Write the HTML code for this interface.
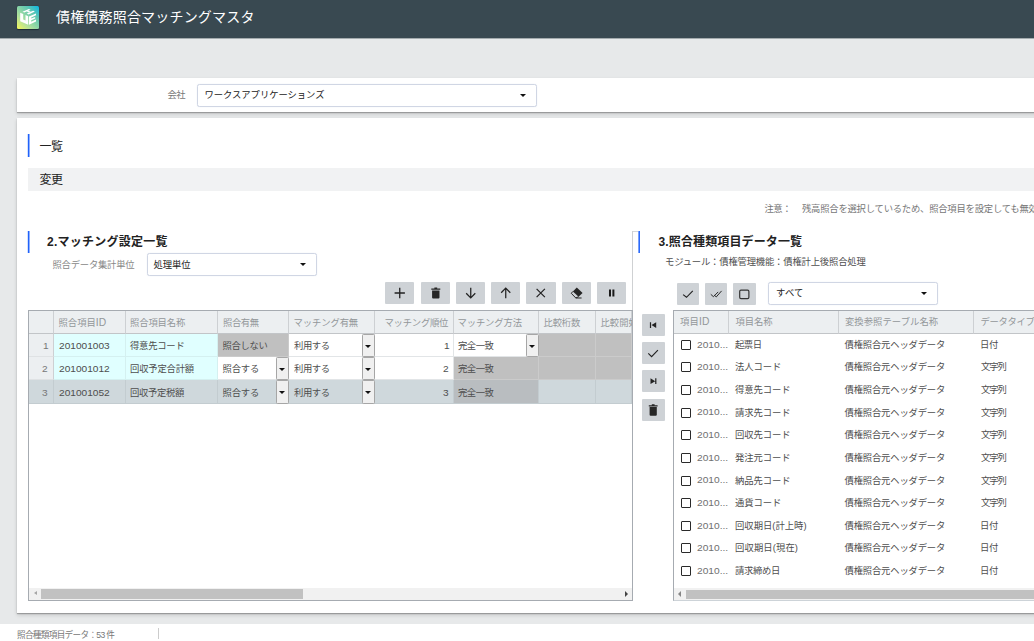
<!DOCTYPE html>
<html lang="ja">
<head>
<meta charset="utf-8">
<title>債権債務照合マッチングマスタ</title>
<style>
*{box-sizing:border-box;margin:0;padding:0}
html,body{width:1034px;height:641px;overflow:hidden}
body{background:#e7e9ea;font-family:"Liberation Sans","Noto Sans CJK JP",sans-serif;font-size:9.33px;color:#333;position:relative}
.abs{position:absolute}
.t{position:absolute;white-space:nowrap;line-height:1}
#hdr{left:0;top:0;width:1034px;height:39px;background:#394951;border-bottom:1px solid #a4abae}
#logo{left:17px;top:6px;width:22px;height:22.5px;border-radius:1.5px;box-shadow:0 .6px 1px rgba(5,15,35,.55);background:linear-gradient(45deg,#f6f658 0%,#b4e29a 30%,#5cc6b4 72%,#08b6e6 100%)}
.card{background:#fff;box-shadow:0 1px 1px rgba(0,0,0,.25),0 2px 4px rgba(0,0,0,.15)}
#card1{left:17px;top:78px;width:1030px;height:34px}
#card2{left:17px;top:118px;width:1030px;height:495px}
.sel{position:absolute;height:23px;background:#fff;border:1px solid #d0d6e4;border-radius:2.5px;box-shadow:0 0 1px rgba(160,175,205,.35)}
.caret{position:absolute;right:10px;top:9px;width:0;height:0;border-left:3.2px solid transparent;border-right:3.2px solid transparent;border-top:3.4px solid #111}
.bar{position:absolute;width:3px;background:linear-gradient(90deg,rgba(32,98,250,.2) 0 1px,rgb(32,98,250) 1px 2px,rgba(32,98,250,.5) 2px 3px)}
.bar.b3{background:linear-gradient(90deg,rgba(32,98,250,0) 0 1px,rgba(32,98,250,.6) 1px 2px,rgba(32,98,250,.95) 2px 3px)}
.gbtn{position:absolute;background:#ced2d6;border-radius:1px}
.gbtn svg{position:absolute;left:0;top:0;width:100%;height:100%}
.frame{position:absolute;border:1px solid #a6abb1;background:#fff}
.c{position:absolute;border-right:1px solid #e2e5e7;border-bottom:1px solid #e2e5e7;background:#fff}
.h{background:#eceff1;border-right:1px solid #cdd0d3;border-bottom:1px solid #c2c5c8}
.rn{border-bottom-color:#dfe2e4}
.ro{background:#e0ffff;border-color:#d4f0f0}
.dis{background:#c0c0c0;border-color:#cbcbcb}
.selrow{background:#cfd8dc;border-color:#c3ccd0}
.dissel{background:#b9bdc0;border-color:#c3ccd0}
.dd{position:absolute;width:13px;top:0;bottom:-1px;background:#f0f0f0;border:1px solid #a6a6a6;border-radius:1.3px}
.dd i{position:absolute;left:2.4px;top:9.5px;width:0;height:0;border-left:3.1px solid transparent;border-right:3.1px solid transparent;border-top:3.2px solid #111}
.sb{position:absolute;height:12px;background:#f1f1f1}
.sbth{position:absolute;top:1px;height:9.6px;background:#c1c1c1}
.arl{position:absolute;left:4.5px;top:3.2px;width:0;height:0;border-top:2.6px solid transparent;border-bottom:2.6px solid transparent;border-right:3px solid #a6a6a6}
.arr{position:absolute;right:4.2px;top:2.8px;width:0;height:0;border-top:3.1px solid transparent;border-bottom:3.1px solid transparent;border-left:3.8px solid #444}
.cb{position:absolute;width:10px;height:10px;border:1.2px solid #2a2a2a;border-radius:1px;background:#fff}
#clipL{left:0;top:0;width:632px;height:641px;overflow:hidden}

</style>
</head>
<body>
<div id="hdr" class="abs"></div>
<div id="logo" class="abs">
<svg viewBox="0 0 22 22" width="22" height="22"><g fill="#fff"><path d="M3.2 6.7L6.2 8V13.6L8.5 14.6V9L11.2 10.2V18.8L3.2 15.3Z"/><path d="M12 10.5L19 7.5V9.3L14.2 11.4V12.6L18.2 10.9V12.6L14.2 14.3V15.7L19 13.6V15.4L12 18.8Z"/><path d="M5.5 5.8L7.3 6.6L13.6 3.8L11.8 3Z"/><path d="M9.8 7.6L11.6 8.4L17.9 5.6L16.1 4.8Z"/><path d="M9.5 5.6L12 6.6L13.9 5.8L11.4 4.8Z"/></g></svg>
</div>

<div id="card1" class="abs card"></div>
<div class="sel" style="left:197px;top:84px;width:340px;height:22.5px"><div class="caret"></div></div>

<div id="card2" class="abs card"></div>
<div class="bar" style="left:27px;top:134px;height:23px"></div>
<div class="abs" style="left:28px;top:168.4px;width:1010px;height:22.5px;background:#f1f2f3"></div>

<!-- section 2 -->
<div class="bar" style="left:27px;top:231px;height:22px"></div>
<div class="sel" style="left:146.5px;top:253px;width:170px"><div class="caret"></div></div>

<div class="gbtn" style="left:385.2px;top:282px;width:29.2px;height:22px"><svg viewBox="0 0 29.2 22"><path d="M14.75 5.8v10.4M9.6 11h10.3" stroke="#222" stroke-width="1.3" fill="none"/></svg></div>
<div class="gbtn" style="left:420.5px;top:282px;width:29.2px;height:22px"><svg viewBox="0 0 29.2 22"><path d="M10.3 6.6h9v1.2h-9zM13.4 5.6h2.8v1.2h-2.8zM11.1 8.4h7.4v7.2a1 1 0 0 1-1 1h-5.4a1 1 0 0 1-1-1z" fill="#262626"/></svg></div>
<div class="gbtn" style="left:455.8px;top:282px;width:29.2px;height:22px"><svg viewBox="0 0 29.2 22"><path d="M14.75 5.8v10M10.2 11.3l4.55 4.6 4.55-4.6" stroke="#222" stroke-width="1.25" fill="none"/></svg></div>
<div class="gbtn" style="left:491.1px;top:282px;width:29.2px;height:22px"><svg viewBox="0 0 29.2 22"><path d="M14.75 16.2v-10M10.2 10.7l4.55-4.6 4.55 4.6" stroke="#222" stroke-width="1.25" fill="none"/></svg></div>
<div class="gbtn" style="left:526.4px;top:282px;width:29.2px;height:22px"><svg viewBox="0 0 29.2 22"><path d="M10.6 6.9l8.3 8.3M18.9 6.9l-8.3 8.3" stroke="#222" stroke-width="1.2" fill="none"/></svg></div>
<div class="gbtn" style="left:561.8px;top:282px;width:29.2px;height:22px"><svg viewBox="0 0 29.2 22"><path d="M14.8 5.5L20.6 10.9 16.6 14.7 10.9 9.4Z" fill="#262626"/><path d="M10.9 9.4L9.3 11.3 13.8 16H19.6M13.8 16L16.6 14.7" stroke="#262626" stroke-width="1" fill="none"/></svg></div>
<div class="gbtn" style="left:597.1px;top:282px;width:29.2px;height:22px"><svg viewBox="0 0 29.2 22"><path d="M12 7.6h2v7h-2zM15.4 7.6h2v7h-2z" fill="#1a1a1a"/></svg></div>

<div class="frame" style="left:28px;top:310px;width:605px;height:291px"></div>
<div id="clipL" class="abs">
<div class="c h" style="left:29px;top:311px;width:25px;height:23px"></div>
<div class="c h" style="left:54px;top:311px;width:72px;height:23px"></div>
<div class="c h" style="left:126px;top:311px;width:92px;height:23px"></div>
<div class="c h" style="left:218px;top:311px;width:71px;height:23px"></div>
<div class="c h" style="left:289px;top:311px;width:86px;height:23px"></div>
<div class="c h" style="left:375px;top:311px;width:79px;height:23px"></div>
<div class="c h" style="left:454px;top:311px;width:85px;height:23px"></div>
<div class="c h" style="left:539px;top:311px;width:57px;height:23px"></div>
<div class="c h" style="left:596px;top:311px;width:36px;height:23px"></div>
<div class="c h rn" style="left:29px;top:334px;width:25px;height:23px"></div>
<div class="c ro" style="left:54px;top:334px;width:72px;height:23px"></div>
<div class="c ro" style="left:126px;top:334px;width:92px;height:23px"></div>
<div class="c dis" style="left:218px;top:334px;width:71px;height:23px"></div>
<div class="c " style="left:289px;top:334px;width:86px;height:23px"><span class="dd" style="left:73px"><i></i></span></div>
<div class="c " style="left:375px;top:334px;width:79px;height:23px"></div>
<div class="c " style="left:454px;top:334px;width:85px;height:23px"><span class="dd" style="left:72px"><i></i></span></div>
<div class="c dis" style="left:539px;top:334px;width:57px;height:23px"></div>
<div class="c dis" style="left:596px;top:334px;width:36px;height:23px"></div>
<div class="c h rn" style="left:29px;top:357px;width:25px;height:23px"></div>
<div class="c ro" style="left:54px;top:357px;width:72px;height:23px"></div>
<div class="c ro" style="left:126px;top:357px;width:92px;height:23px"></div>
<div class="c " style="left:218px;top:357px;width:71px;height:23px"><span class="dd" style="left:58px"><i></i></span></div>
<div class="c " style="left:289px;top:357px;width:86px;height:23px"><span class="dd" style="left:73px"><i></i></span></div>
<div class="c " style="left:375px;top:357px;width:79px;height:23px"></div>
<div class="c dis" style="left:454px;top:357px;width:85px;height:23px"></div>
<div class="c dis" style="left:539px;top:357px;width:57px;height:23px"></div>
<div class="c dis" style="left:596px;top:357px;width:36px;height:23px"></div>
<div class="c h rn selrow" style="left:29px;top:380px;width:25px;height:24px"></div>
<div class="c ro selrow" style="left:54px;top:380px;width:72px;height:24px"></div>
<div class="c ro selrow" style="left:126px;top:380px;width:92px;height:24px"></div>
<div class="c  selrow" style="left:218px;top:380px;width:71px;height:24px"><span class="dd" style="left:58px"><i></i></span></div>
<div class="c  selrow" style="left:289px;top:380px;width:86px;height:24px"><span class="dd" style="left:73px"><i></i></span></div>
<div class="c  selrow" style="left:375px;top:380px;width:79px;height:24px"></div>
<div class="c dissel" style="left:454px;top:380px;width:85px;height:24px"></div>
<div class="c selrow" style="left:539px;top:380px;width:57px;height:24px"></div>
<div class="c selrow" style="left:596px;top:380px;width:36px;height:24px"></div>
<div class="t" id="t21" style="left:600.50px;top:319.00px;font-size:9.33px;color:#93979a;">比較開始位置</div>
</div>
<div class="sb" style="left:29px;top:588px;width:603px"><i class="arl"></i><i class="arr"></i><div class="sbth" style="left:12px;width:262px"></div></div>

<!-- splitter -->
<div class="abs" style="left:632px;top:231px;width:1px;height:79px;background:#cfd1d3"></div>
<div class="abs" style="left:633px;top:231px;width:5px;height:1px;background:#d6d8da"></div>

<!-- section 3 -->
<div class="bar b3" style="left:637px;top:231px;height:22px"></div>
<div class="gbtn" style="left:677px;top:282.6px;width:22.2px;height:22.1px"><svg viewBox="0 0 22.2 22.1"><path d="M6.1 11.6L9.5 14.3 15.8 7.9" stroke="#222" stroke-width="1.15" fill="none"/></svg></div>
<div class="gbtn" style="left:705.2px;top:282.6px;width:22.2px;height:22.1px"><svg viewBox="0 0 22.2 22.1"><path d="M5.8 11.3L8.4 13.7 13.2 8.9M9.4 12.3L11.3 13.9 16.6 7.9" stroke="#222" stroke-width=".95" fill="none"/></svg></div>
<div class="gbtn" style="left:733.4px;top:282.6px;width:22.2px;height:22.1px"><svg viewBox="0 0 22.2 22.1"><rect x="6.7" y="7.1" width="9.2" height="8.5" rx="1.3" stroke="#333" stroke-width="1.2" fill="none"/></svg></div>
<div class="sel" style="left:768px;top:281.7px;width:170px"><div class="caret"></div></div>
<div class="gbtn" style="left:642.3px;top:313.7px;width:22.3px;height:22.3px"><svg viewBox="0 0 22.3 22.3"><path d="M7.9 8.2h1.2v5.8H7.9zM14.2 8.2v5.8l-4.7-2.9z" fill="#222"/></svg></div>
<div class="gbtn" style="left:642.3px;top:342px;width:22.3px;height:22.3px"><svg viewBox="0 0 22.3 22.3"><path d="M6.3 11.4L9.6 14.7 15.9 8.1" stroke="#222" stroke-width="1.15" fill="none"/></svg></div>
<div class="gbtn" style="left:642.3px;top:370.2px;width:22.3px;height:22.3px"><svg viewBox="0 0 22.3 22.3"><path d="M13.2 8.3h1.2v5.8h-1.2zM8.5 8.3v5.8l4.7-2.9z" fill="#222"/></svg></div>
<div class="gbtn" style="left:642.3px;top:398.5px;width:22.3px;height:22.3px"><svg viewBox="0 0 22.3 22.3"><path d="M6.8 6.3h8.8v1.2H6.8zM9.8 5.2h2.8v1.2H9.8zM7.6 8.1h7.2v7.6a1 1 0 0 1-1 1H8.6a1 1 0 0 1-1-1z" fill="#262626"/></svg></div>

<div class="frame" style="left:673px;top:310px;width:400px;height:291.4px;border-bottom-color:#cdd3d8"></div>
<div class="c h" style="left:674px;top:311px;width:55px;height:23px"></div>
<div class="c h" style="left:729px;top:311px;width:110px;height:23px"></div>
<div class="c h" style="left:839px;top:311px;width:135px;height:23px"></div>
<div class="c h" style="left:974px;top:311px;width:127px;height:23px"></div>
<i class="cb" style="left:681px;top:339.7px"></i>
<i class="cb" style="left:681px;top:362.3px"></i>
<i class="cb" style="left:681px;top:385.0px"></i>
<i class="cb" style="left:681px;top:407.6px"></i>
<i class="cb" style="left:681px;top:430.2px"></i>
<i class="cb" style="left:681px;top:452.9px"></i>
<i class="cb" style="left:681px;top:475.5px"></i>
<i class="cb" style="left:681px;top:498.1px"></i>
<i class="cb" style="left:681px;top:520.8px"></i>
<i class="cb" style="left:681px;top:543.4px"></i>
<i class="cb" style="left:681px;top:566.0px"></i>
<div class="sb" style="left:674px;top:588px;width:400px"><i class="arl" style="border-right-color:#858585;border-right-width:3.4px;border-top-width:3px;border-bottom-width:3px;left:4.4px;top:3.4px"></i><div class="sbth" style="left:12px;width:400px;top:2px;height:8.8px"></div></div>

<!-- status bar -->
<div class="abs" style="left:0;top:624px;width:1034px;height:17px;background:#fff"></div>
<div class="abs" style="left:158px;top:628px;width:1px;height:11px;background:#ccc"></div>

<div class="t" id="t0" style="left:56.00px;top:10.00px;font-size:14px;color:#fff;letter-spacing:0.185px;">債権債務照合マッチングマスタ</div>
<div class="t" id="t1" style="left:167.50px;top:91.00px;font-size:9.33px;color:#777;letter-spacing:-0.600px;">会社</div>
<div class="t" id="t2" style="left:204.50px;top:91.00px;font-size:9.33px;color:#222;letter-spacing:-0.050px;">ワークスアプリケーションズ</div>
<div class="t" id="t3" style="left:39.50px;top:141.00px;font-size:12px;color:#222;letter-spacing:-0.400px;">一覧</div>
<div class="t" id="t4" style="left:39.50px;top:174.00px;font-size:12px;color:#222;letter-spacing:-0.400px;">変更</div>
<div class="t" id="t5" style="left:764.50px;top:205.00px;font-size:9.33px;color:#777;letter-spacing:-0.500px;">注意：</div>
<div class="t" id="t6" style="left:802.00px;top:205.00px;font-size:9.33px;color:#777;letter-spacing:-0.225px;">残高照合を選択しているため、照合項目を設定しても無<span class="tr">効です。</span></div>
<div class="t" id="t7" style="left:47.00px;top:236.00px;font-size:12px;color:#222;letter-spacing:0.240px;font-weight:bold">2.マッチング設定一覧</div>
<div class="t" id="t8" style="left:52.50px;top:261.00px;font-size:9.33px;color:#888;letter-spacing:-0.225px;">照合データ集計単位</div>
<div class="t" id="t9" style="left:153.50px;top:261.00px;font-size:9.33px;color:#222;letter-spacing:-0.067px;">処理単位</div>
<div class="t" id="t10" style="left:658.50px;top:236.00px;font-size:12px;color:#222;letter-spacing:0.133px;font-weight:bold">3.照合種類項目データ一覧</div>
<div class="t" id="t11" style="left:665.00px;top:258.00px;font-size:9.33px;color:#4e4e4e;letter-spacing:-0.181px;">モジュール：債権管理機能：債権計上後照合処理</div>
<div class="t" id="t12" style="left:776.00px;top:289.00px;font-size:9.33px;color:#222;letter-spacing:0.200px;">すべて</div>
<div class="t" id="t13" style="left:17.00px;top:631.00px;font-size:8.6px;color:#777;letter-spacing:-0.662px;">照合種類項目データ：53 件</div>
<div class="t" id="t14" style="left:58.50px;top:318.00px;font-size:9.33px;color:#93979a;">照合項目<span style="font-size:10.3px">ID</span></div>
<div class="t" id="t15" style="left:130.00px;top:319.00px;font-size:9.33px;color:#93979a;letter-spacing:-0.120px;">照合項目名称</div>
<div class="t" id="t16" style="left:223.00px;top:319.00px;font-size:9.33px;color:#93979a;letter-spacing:-0.400px;">照合有無</div>
<div class="t" id="t17" style="left:293.50px;top:319.00px;font-size:9.33px;color:#93979a;letter-spacing:-0.100px;">マッチング有無</div>
<div class="t" id="t18" style="left:384.50px;top:319.00px;font-size:9.33px;color:#93979a;letter-spacing:-0.233px;">マッチング順位</div>
<div class="t" id="t19" style="left:457.50px;top:319.00px;font-size:9.33px;color:#93979a;letter-spacing:-0.133px;">マッチング方法</div>
<div class="t" id="t20" style="left:543.50px;top:319.00px;font-size:9.33px;color:#93979a;letter-spacing:-0.200px;">比較桁数</div>
<div class="t" id="t22" style="left:43.40px;top:342.00px;font-size:9.33px;color:#777;transform:scaleX(1.085);transform-origin:0 0;">1</div>
<div class="t" id="t23" style="left:58.50px;top:342.00px;font-size:9.33px;color:#4e4e4e;transform:scaleX(1.085);transform-origin:0 0;">201001003</div>
<div class="t" id="t24" style="left:130.00px;top:342.00px;font-size:9.33px;color:#4e4e4e;letter-spacing:-0.240px;">得意先コード</div>
<div class="t" id="t25" style="left:222.50px;top:342.00px;font-size:9.33px;color:#4e4e4e;letter-spacing:-0.300px;">照合しない</div>
<div class="t" id="t26" style="left:294.00px;top:342.00px;font-size:9.33px;color:#4e4e4e;letter-spacing:-0.400px;">利用する</div>
<div class="t" id="t27" style="left:444.00px;top:342.00px;font-size:9.33px;color:#4e4e4e;transform:scaleX(1.085);transform-origin:0 0;">1</div>
<div class="t" id="t28" style="left:458.00px;top:342.00px;font-size:9.33px;color:#4e4e4e;letter-spacing:-0.467px;">完全一致</div>
<div class="t" id="t29" style="left:42.40px;top:365.00px;font-size:9.33px;color:#777;transform:scaleX(1.085);transform-origin:0 0;">2</div>
<div class="t" id="t30" style="left:58.50px;top:365.00px;font-size:9.33px;color:#4e4e4e;transform:scaleX(1.087);transform-origin:0 0;">201001012</div>
<div class="t" id="t31" style="left:130.00px;top:365.00px;font-size:9.33px;color:#4e4e4e;letter-spacing:-0.200px;">回収予定合計額</div>
<div class="t" id="t32" style="left:222.50px;top:365.00px;font-size:9.33px;color:#4e4e4e;letter-spacing:-0.200px;">照合する</div>
<div class="t" id="t33" style="left:294.00px;top:365.00px;font-size:9.33px;color:#4e4e4e;letter-spacing:-0.400px;">利用する</div>
<div class="t" id="t34" style="left:443.00px;top:365.00px;font-size:9.33px;color:#4e4e4e;transform:scaleX(1.085);transform-origin:0 0;">2</div>
<div class="t" id="t35" style="left:458.00px;top:365.00px;font-size:9.33px;color:#4e4e4e;letter-spacing:-0.467px;">完全一致</div>
<div class="t" id="t36" style="left:42.40px;top:389.00px;font-size:9.33px;color:#777;transform:scaleX(1.085);transform-origin:0 0;">3</div>
<div class="t" id="t37" style="left:58.50px;top:389.00px;font-size:9.33px;color:#4e4e4e;transform:scaleX(1.087);transform-origin:0 0;">201001052</div>
<div class="t" id="t38" style="left:130.00px;top:389.00px;font-size:9.33px;color:#4e4e4e;letter-spacing:-0.320px;">回収予定税額</div>
<div class="t" id="t39" style="left:222.50px;top:389.00px;font-size:9.33px;color:#4e4e4e;letter-spacing:-0.200px;">照合する</div>
<div class="t" id="t40" style="left:294.00px;top:389.00px;font-size:9.33px;color:#4e4e4e;letter-spacing:-0.400px;">利用する</div>
<div class="t" id="t41" style="left:443.00px;top:389.00px;font-size:9.33px;color:#4e4e4e;transform:scaleX(1.085);transform-origin:0 0;">3</div>
<div class="t" id="t42" style="left:458.00px;top:389.00px;font-size:9.33px;color:#4e4e4e;letter-spacing:-0.467px;">完全一致</div>
<div class="t" id="t43" style="left:680.00px;top:317.00px;font-size:9.33px;color:#93979a;letter-spacing:0.133px;">項目<span style="font-size:10.3px">ID</span></div>
<div class="t" id="t44" style="left:735.50px;top:318.00px;font-size:9.33px;color:#93979a;letter-spacing:-0.067px;">項目名称</div>
<div class="t" id="t45" style="left:845.00px;top:318.00px;font-size:9.33px;color:#93979a;letter-spacing:0.044px;">変換参照テーブル名称</div>
<div class="t" id="t46" style="left:980.50px;top:318.00px;font-size:9.33px;color:#93979a;letter-spacing:-0.320px;">データタイプ</div>
<div class="t" id="t47" style="left:697.00px;top:341.00px;font-size:9.33px;color:#707070;transform:scaleX(1.092);transform-origin:0 0;">2010...</div>
<div class="t" id="t48" style="left:735.00px;top:341.00px;font-size:9.33px;color:#4e4e4e;letter-spacing:-0.500px;">起票日</div>
<div class="t" id="t49" style="left:844.50px;top:341.00px;font-size:9.33px;color:#4e4e4e;letter-spacing:-0.180px;">債権照合元ヘッダデータ</div>
<div class="t" id="t50" style="left:980.00px;top:341.00px;font-size:9.33px;color:#4e4e4e;letter-spacing:-0.400px;">日付</div>
<div class="t" id="t51" style="left:697.00px;top:363.00px;font-size:9.33px;color:#707070;transform:scaleX(1.092);transform-origin:0 0;">2010...</div>
<div class="t" id="t52" style="left:735.00px;top:363.00px;font-size:9.33px;color:#4e4e4e;letter-spacing:-0.100px;">法人コード</div>
<div class="t" id="t53" style="left:844.50px;top:363.00px;font-size:9.33px;color:#4e4e4e;letter-spacing:-0.180px;">債権照合元ヘッダデータ</div>
<div class="t" id="t54" style="left:981.00px;top:363.00px;font-size:9.33px;color:#4e4e4e;letter-spacing:-1.100px;">文字列</div>
<div class="t" id="t55" style="left:697.00px;top:386.00px;font-size:9.33px;color:#707070;transform:scaleX(1.092);transform-origin:0 0;">2010...</div>
<div class="t" id="t56" style="left:735.00px;top:386.00px;font-size:9.33px;color:#4e4e4e;letter-spacing:-0.080px;">得意先コード</div>
<div class="t" id="t57" style="left:844.50px;top:386.00px;font-size:9.33px;color:#4e4e4e;letter-spacing:-0.180px;">債権照合元ヘッダデータ</div>
<div class="t" id="t58" style="left:981.00px;top:386.00px;font-size:9.33px;color:#4e4e4e;letter-spacing:-1.100px;">文字列</div>
<div class="t" id="t59" style="left:697.00px;top:408.00px;font-size:9.33px;color:#707070;transform:scaleX(1.092);transform-origin:0 0;">2010...</div>
<div class="t" id="t60" style="left:735.00px;top:409.00px;font-size:9.33px;color:#4e4e4e;letter-spacing:-0.080px;">請求先コード</div>
<div class="t" id="t61" style="left:844.50px;top:409.00px;font-size:9.33px;color:#4e4e4e;letter-spacing:-0.180px;">債権照合元ヘッダデータ</div>
<div class="t" id="t62" style="left:981.00px;top:409.00px;font-size:9.33px;color:#4e4e4e;letter-spacing:-1.100px;">文字列</div>
<div class="t" id="t63" style="left:697.00px;top:431.00px;font-size:9.33px;color:#707070;transform:scaleX(1.092);transform-origin:0 0;">2010...</div>
<div class="t" id="t64" style="left:735.00px;top:431.00px;font-size:9.33px;color:#4e4e4e;letter-spacing:-0.080px;">回収先コード</div>
<div class="t" id="t65" style="left:844.50px;top:431.00px;font-size:9.33px;color:#4e4e4e;letter-spacing:-0.180px;">債権照合元ヘッダデータ</div>
<div class="t" id="t66" style="left:981.00px;top:431.00px;font-size:9.33px;color:#4e4e4e;letter-spacing:-1.100px;">文字列</div>
<div class="t" id="t67" style="left:697.00px;top:454.00px;font-size:9.33px;color:#707070;transform:scaleX(1.092);transform-origin:0 0;">2010...</div>
<div class="t" id="t68" style="left:735.00px;top:454.00px;font-size:9.33px;color:#4e4e4e;letter-spacing:-0.080px;">発注元コード</div>
<div class="t" id="t69" style="left:844.50px;top:454.00px;font-size:9.33px;color:#4e4e4e;letter-spacing:-0.180px;">債権照合元ヘッダデータ</div>
<div class="t" id="t70" style="left:981.00px;top:454.00px;font-size:9.33px;color:#4e4e4e;letter-spacing:-1.100px;">文字列</div>
<div class="t" id="t71" style="left:697.00px;top:476.00px;font-size:9.33px;color:#707070;transform:scaleX(1.092);transform-origin:0 0;">2010...</div>
<div class="t" id="t72" style="left:735.00px;top:477.00px;font-size:9.33px;color:#4e4e4e;letter-spacing:-0.080px;">納品先コード</div>
<div class="t" id="t73" style="left:844.50px;top:477.00px;font-size:9.33px;color:#4e4e4e;letter-spacing:-0.180px;">債権照合元ヘッダデータ</div>
<div class="t" id="t74" style="left:981.00px;top:477.00px;font-size:9.33px;color:#4e4e4e;letter-spacing:-1.100px;">文字列</div>
<div class="t" id="t75" style="left:697.00px;top:499.00px;font-size:9.33px;color:#707070;transform:scaleX(1.092);transform-origin:0 0;">2010...</div>
<div class="t" id="t76" style="left:735.00px;top:499.00px;font-size:9.33px;color:#4e4e4e;letter-spacing:-0.100px;">通貨コード</div>
<div class="t" id="t77" style="left:844.50px;top:499.00px;font-size:9.33px;color:#4e4e4e;letter-spacing:-0.180px;">債権照合元ヘッダデータ</div>
<div class="t" id="t78" style="left:981.00px;top:499.00px;font-size:9.33px;color:#4e4e4e;letter-spacing:-1.100px;">文字列</div>
<div class="t" id="t79" style="left:697.00px;top:522.00px;font-size:9.33px;color:#707070;transform:scaleX(1.092);transform-origin:0 0;">2010...</div>
<div class="t" id="t80" style="left:735.00px;top:522.00px;font-size:9.33px;color:#4e4e4e;">回収期日(計上時)</div>
<div class="t" id="t81" style="left:844.50px;top:522.00px;font-size:9.33px;color:#4e4e4e;letter-spacing:-0.180px;">債権照合元ヘッダデータ</div>
<div class="t" id="t82" style="left:980.00px;top:522.00px;font-size:9.33px;color:#4e4e4e;letter-spacing:-0.400px;">日付</div>
<div class="t" id="t83" style="left:697.00px;top:544.00px;font-size:9.33px;color:#707070;transform:scaleX(1.092);transform-origin:0 0;">2010...</div>
<div class="t" id="t84" style="left:735.00px;top:544.00px;font-size:9.33px;color:#4e4e4e;letter-spacing:0.114px;">回収期日(現在)</div>
<div class="t" id="t85" style="left:844.50px;top:544.00px;font-size:9.33px;color:#4e4e4e;letter-spacing:-0.180px;">債権照合元ヘッダデータ</div>
<div class="t" id="t86" style="left:980.00px;top:544.00px;font-size:9.33px;color:#4e4e4e;letter-spacing:-0.400px;">日付</div>
<div class="t" id="t87" style="left:697.00px;top:567.00px;font-size:9.33px;color:#707070;transform:scaleX(1.092);transform-origin:0 0;">2010...</div>
<div class="t" id="t88" style="left:735.00px;top:567.00px;font-size:9.33px;color:#4e4e4e;letter-spacing:-0.350px;">請求締め日</div>
<div class="t" id="t89" style="left:844.50px;top:567.00px;font-size:9.33px;color:#4e4e4e;letter-spacing:-0.180px;">債権照合元ヘッダデータ</div>
<div class="t" id="t90" style="left:980.00px;top:567.00px;font-size:9.33px;color:#4e4e4e;letter-spacing:-0.400px;">日付</div>
</body>
</html>
